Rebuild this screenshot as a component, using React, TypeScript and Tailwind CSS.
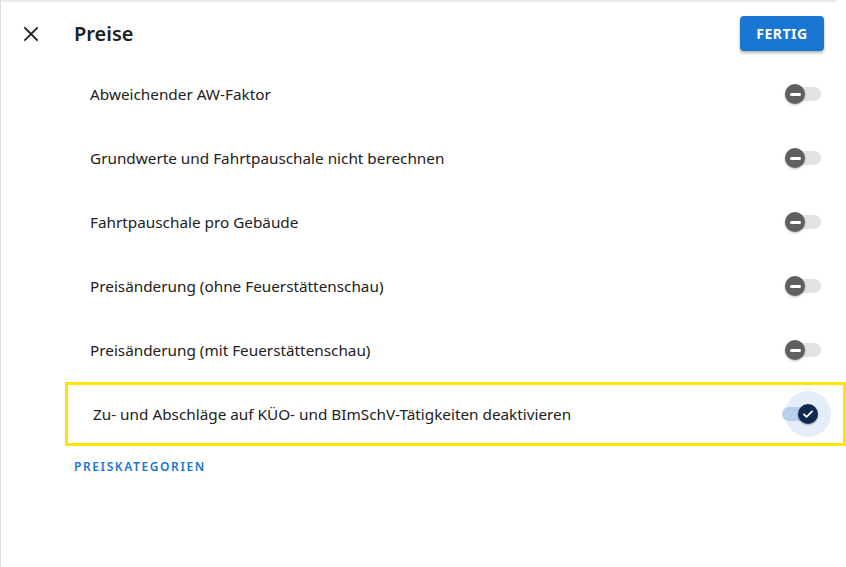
import React from "react";

const rows = [
  { id: "aw", label: "Abweichender AW-Faktor", checked: false },
  { id: "grund", label: "Grundwerte und Fahrtpauschale nicht berechnen", checked: false },
  { id: "fahrt", label: "Fahrtpauschale pro Gebäude", checked: false },
  { id: "ohne", label: "Preisänderung (ohne Feuerstättenschau)", checked: false },
  { id: "mit", label: "Preisänderung (mit Feuerstättenschau)", checked: false },
  { id: "kuo", label: "Zu- und Abschläge auf KÜO- und BImSchV-Tätigkeiten deaktivieren", checked: true },
];

const Toggle = ({ checked }: { checked: boolean }) => (
  <div className="relative h-5 w-9 shrink-0">
    {checked && <div className="absolute top-[-13px] left-[3px] h-[46px] w-[46px] rounded-full bg-[#e5edf8]" />}
    <div
      className={`absolute top-[3px] left-0 h-[14px] w-9 rounded-full ${
        checked ? "bg-[#b7d0ee]" : "bg-[#e2e2e2]"
      }`}
    />
    <div
      className={`absolute top-0 flex h-5 w-5 items-center justify-center rounded-full shadow-[0_1px_2px_rgba(0,0,0,0.3)] ${
        checked ? "left-4 bg-[#0f2b50]" : "left-0 bg-[#606060]"
      }`}
    >
      {checked ? (
        <svg width="14" height="14" viewBox="0 0 24 24" fill="none" stroke="white" strokeWidth="3" strokeLinecap="round" strokeLinejoin="round">
          <path d="M5 12.5l4.5 4.5L19 7.5" />
        </svg>
      ) : (
        <div className="h-[3px] w-[11px] rounded-sm bg-white" />
      )}
    </div>
  </div>
);

export default function App() {
  return (
    <div className="h-[567px] w-[846px] border-l border-l-[#dcdcdc] bg-white font-['Noto_Sans',sans-serif] text-[#212121]">
      <div className="h-[2px] w-[835px] bg-[#e9ecef]" />
      <header className="flex h-[60px] items-center pt-[3px] pr-[22px] pl-[21px]">
        <svg width="18" height="18" viewBox="0 0 24 24" fill="none" stroke="#222" strokeWidth="2.4" strokeLinecap="square">
          <path d="M4 4l16 16M20 4L4 20" />
        </svg>
        <h1 className="ml-[34px] text-[20px] font-semibold">Preise</h1>
        <button className="ml-auto h-[35px] w-[84px] rounded bg-[#1976d2] text-[14px] font-bold tracking-[0.5px] text-white shadow-[0_2px_3px_rgba(0,0,0,0.3)]">
          FERTIG
        </button>
      </header>
      <ul className="ml-[64px] flex flex-col">
        {rows.map((row) => (
          <li
            key={row.id}
            className={`flex h-16 items-center pr-[25px] pl-[25px] text-[15.3px] ${
              row.checked ? "border-[3px] border-[#ffe500] pr-[22px] pl-[22px]" : ""
            }`}
          >
            <span className="flex-1">{row.label}</span>
            <Toggle checked={row.checked} />
          </li>
        ))}
      </ul>
      <div className="mt-[12px] ml-[73px] text-[12px] font-semibold tracking-[1.6px] text-[#1976d2]">PREISKATEGORIEN</div>
    </div>
  );
}
